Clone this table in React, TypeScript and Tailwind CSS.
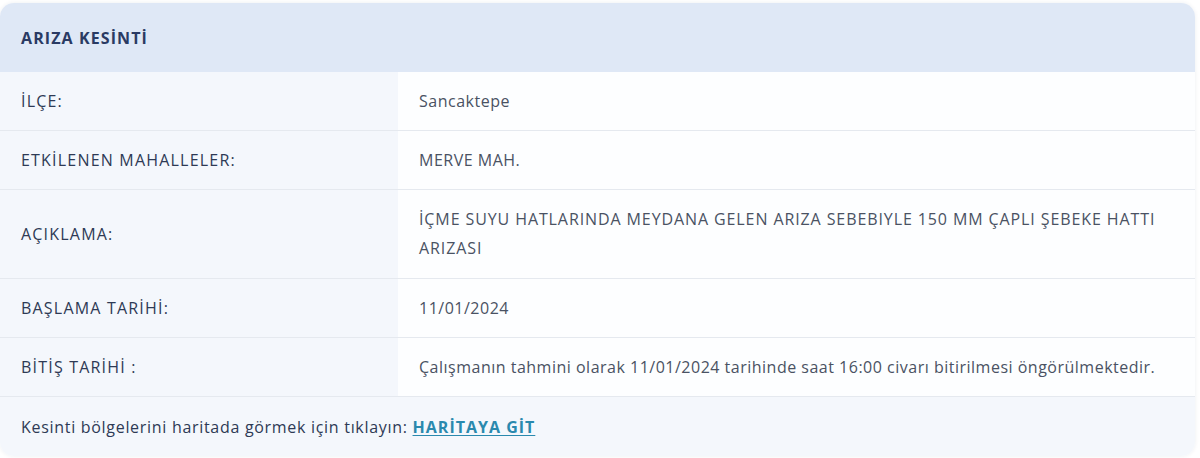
const rows: { label: string; value: string; two?: boolean }[] = [
  { label: "İLÇE:", value: "Sancaktepe" },
  { label: "ETKİLENEN MAHALLELER:", value: "MERVE MAH." },
  {
    label: "AÇIKLAMA:",
    value: "İÇME SUYU HATLARINDA MEYDANA GELEN ARIZA SEBEBIYLE 150 MM ÇAPLI ŞEBEKE HATTI ARIZASI",
    two: true,
  },
  { label: "BAŞLAMA TARİHİ:", value: "11/01/2024" },
  {
    label: "BİTİŞ TARİHİ :",
    value: "Çalışmanın tahmini olarak 11/01/2024 tarihinde saat 16:00 civarı bitirilmesi öngörülmektedir.",
  },
];

export default function App() {
  return (
    <div className="min-h-[458px] bg-white pt-[3px] pr-[5px] font-['Open_Sans',sans-serif] text-[16px] tracking-[0.5px]">
      <div className="overflow-hidden rounded-[14px] bg-white shadow-[0_0_4px_rgba(30,50,90,0.08)]">
        {/* header */}
        <div className="flex h-[69px] items-center bg-[#dfe8f6] px-[21px] text-[16px] font-bold tracking-[1.1px] text-[#2a3a63]">
          ARIZA KESİNTİ
        </div>

        {rows.map((r) => (
          <div key={r.label} className="flex border-b border-[#e5e9ef]">
            <div className="flex w-[398px] shrink-0 items-center bg-[#f4f7fc] px-[21px] font-medium tracking-[1.2px] text-[#2e3a55]">
              {r.label}
            </div>
            <div
              className={`flex flex-1 items-center bg-[#fdfeff] px-[21px] text-[#4a5263] ${
                r.two ? "py-[15px] leading-[29px] tracking-[0.9px]" : "py-4 leading-[26px]"
              }`}
            >
              <span className={r.two ? "max-w-[760px]" : ""}>{r.value}</span>
            </div>
          </div>
        ))}

        {/* footer */}
        <div className="flex h-[59px] items-center bg-[#f4f7fc] px-[21px] tracking-[0.7px] text-[#2e3a55]">
          Kesinti bölgelerini haritada görmek için tıklayın:&nbsp;
          <a href="#" className="font-bold tracking-[1px] text-[#2a89ae] underline underline-offset-2">
            HARİTAYA GİT
          </a>
        </div>
      </div>
    </div>
  );
}
